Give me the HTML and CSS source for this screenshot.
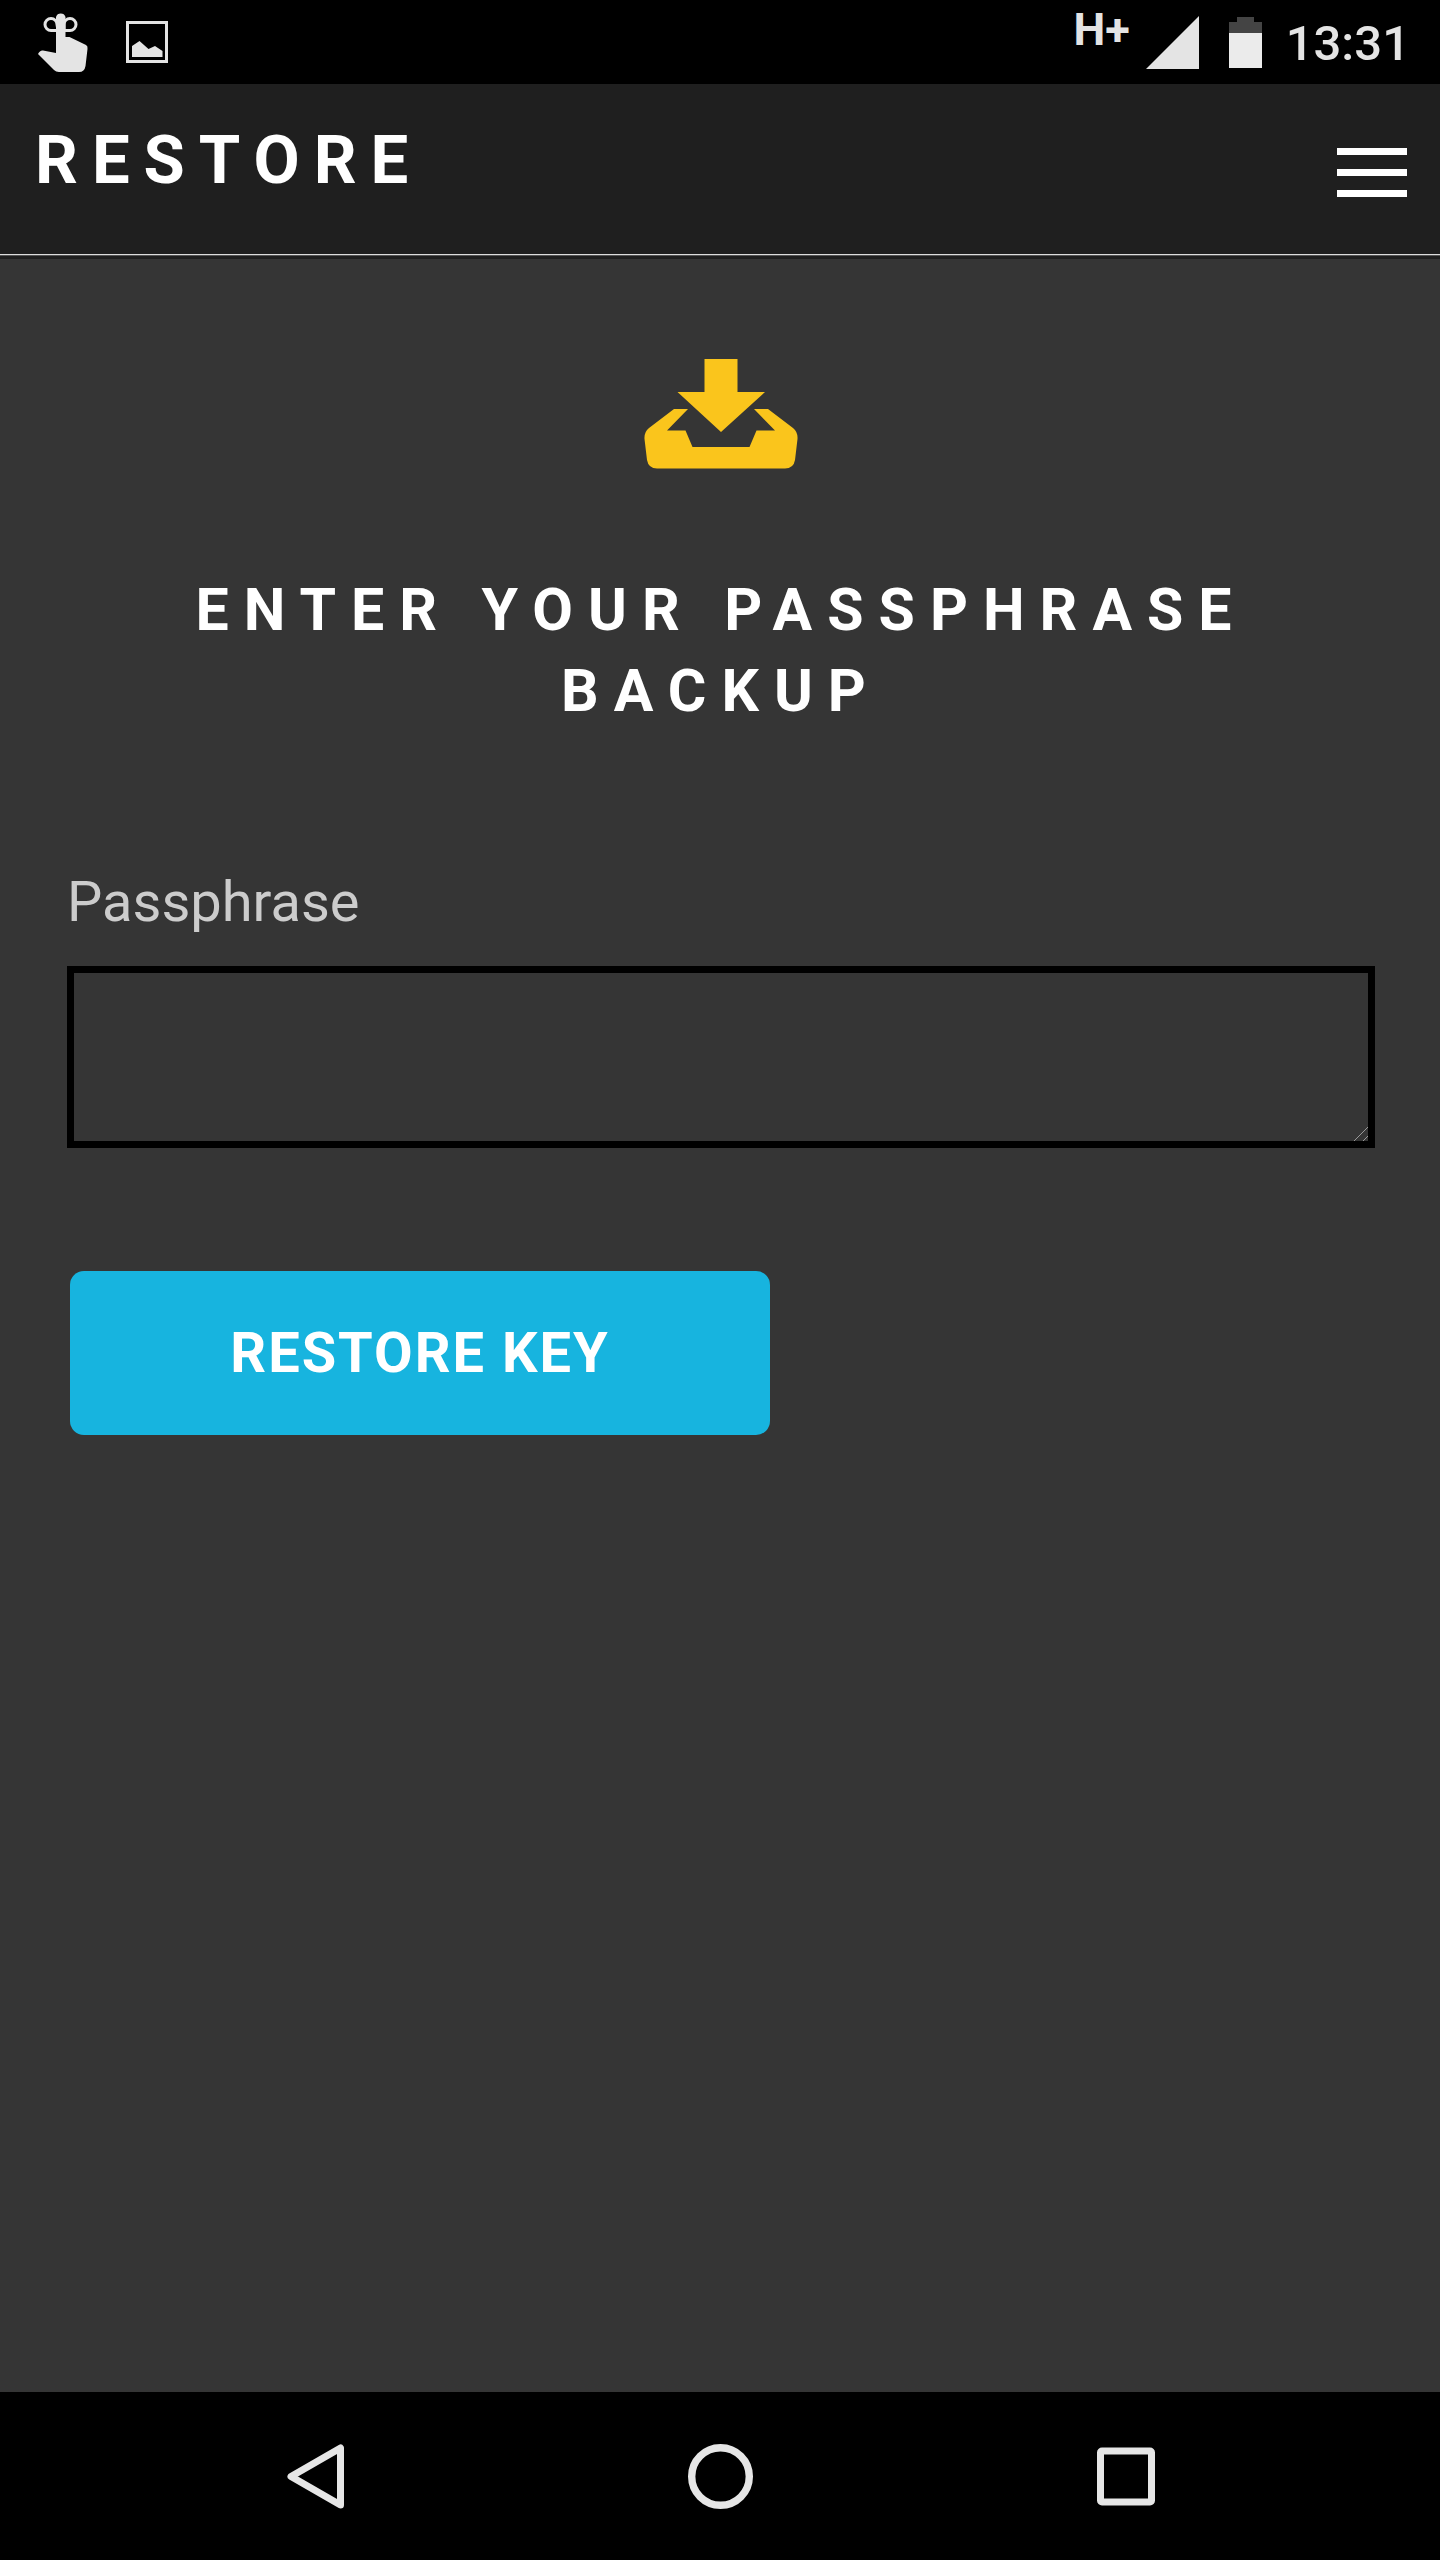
FILE: index.html
```html
<!DOCTYPE html>
<html lang="en">
<head>
  <meta charset="utf-8">
  <meta name="viewport" content="width=device-width, initial-scale=1">
  <title>Restore</title>
  <link rel="stylesheet" href="styles.css">
</head>
<body class="screen">
  <div class="status-bar">
    <div class="status-group status-notices">
      <svg class="icon-touch" viewBox="0 0 50 60" aria-hidden="true">
        <path fill="currentColor" d="M18 42V5a5 5 0 0 1 9.500 0V25h4L48 33Q50 34 49.500 37L47.500 54Q46.500 60 41 60H21Q18 60 16 58L0 42Q2 38 5 38.500L18 41Z"/>
        <g fill="none" stroke="currentColor" stroke-width="3">
          <path d="M20 18.500H13a6 6 0 1 1 6-6Z"/>
          <path d="M26 18.500H32a6 6 0 1 0-6-6Z"/>
        </g>
      </svg>
      <svg class="icon-image" viewBox="0 0 42 42" aria-hidden="true">
        <rect x="1.500" y="1.500" width="39" height="39" fill="none" stroke="currentColor" stroke-width="3"/>
        <path fill="currentColor" d="M6 25L13.500 20L22.500 28L29 25L36.500 30V36H6Z"/>
      </svg>
    </div>
    <div class="status-group status-system">
      <span class="network">H+</span>
      <svg class="icon-signal" viewBox="0 0 53 53" aria-hidden="true"><path fill="currentColor" d="M0 53L53 0V53Z"/></svg>
      <svg class="icon-battery" viewBox="0 0 33 51" aria-hidden="true">
        <path fill="#444" d="M8 0H25V5H33V16H0V5H8Z"/>
        <path fill="#ebebeb" d="M0 16H33V51H0Z"/>
      </svg>
      <time class="clock">13:31</time>
    </div>
  </div>

  <header class="app-header">
    <h1 class="app-title">RESTORE</h1>
    <button class="menu-button" type="button" aria-label="Menu">
      <span class="menu-line"></span>
      <span class="menu-line"></span>
      <span class="menu-line"></span>
    </button>
  </header>

  <main class="content">
    <svg class="icon-restore" viewBox="0 0 154 110" aria-hidden="true">
      <path fill="currentColor" d="M60.500 0H93.500V33H121L77 73L33.500 33H60.500Z"/>
      <path fill="currentColor" d="M30 50H44L23 71.500H41.500L48.500 88H105.500L112.500 71.500H131L110 50H124L149 69Q154 73 153.500 80L151 101Q149.500 109.500 141 109.500H13Q4.500 109.500 3 101L.5 80Q0 73 5 69Z"/>
    </svg>
    <h2 class="heading">ENTER YOUR PASSPHRASE BACKUP</h2>
    <form class="restore-form">
      <label class="field-label" for="passphrase">Passphrase</label>
      <textarea class="field-input" id="passphrase" name="passphrase"></textarea>
      <button class="submit-button" type="button">RESTORE KEY</button>
    </form>
  </main>

  <nav class="nav-bar" aria-label="System">
    <button class="nav-button" type="button" aria-label="Back">
      <svg class="nav-icon" viewBox="0 0 65 65" aria-hidden="true"><path d="M8 32.500L57.500 4V61Z" fill="none" stroke="currentColor" stroke-width="7" stroke-linejoin="round"/></svg>
    </button>
    <button class="nav-button" type="button" aria-label="Home">
      <svg class="nav-icon" viewBox="0 0 65 65" aria-hidden="true"><circle cx="32.500" cy="32.500" r="28.800" fill="none" stroke="currentColor" stroke-width="7.400"/></svg>
    </button>
    <button class="nav-button" type="button" aria-label="Recent apps">
      <svg class="nav-icon" viewBox="0 0 65 65" aria-hidden="true"><rect x="7.500" y="7" width="51" height="51" rx="1.500" fill="none" stroke="currentColor" stroke-width="7"/></svg>
    </button>
  </nav>
</body>
</html>
```

FILE: styles.css
```css
* {
  box-sizing: border-box;
}

.screen {
  display: flex;
  flex-direction: column;
  min-height: 100vh;
  margin: 0;
  background: #353535;
  color: #fff;
  font-family: Roboto, "Liberation Sans", sans-serif;
}

.status-bar {
  display: flex;
  justify-content: space-between;
  height: 84px;
  padding: 0 30px 0 38px;
  background: #000;
  color: #e4e4e4;
}

.status-group {
  display: flex;
  align-items: center;
}

.status-notices {
  gap: 38px;
}

.icon-touch {
  width: 50px;
  height: 60px;
}

.icon-image {
  width: 42px;
  height: 42px;
}

.network {
  align-self: flex-start;
  margin-right: 16px;
  font-size: 45px;
  font-weight: 700;
  line-height: 60px;
}

.icon-signal {
  width: 53px;
  height: 53px;
  margin-right: 30px;
}

.icon-battery {
  width: 33px;
  height: 51px;
  margin-right: 24px;
}

.clock {
  padding-top: 4px;
  font-size: 49px;
  font-weight: 500;
  line-height: 60px;
}

.app-header {
  display: flex;
  align-items: center;
  justify-content: space-between;
  height: 175px;
  padding: 4px 33px 0 35px;
  border-bottom: 3px solid #1f1f1f;
  background: #1f1f1f;
  box-shadow: inset 0 -1px #555, inset 0 -2px #ddd;
}

.app-title {
  margin: 0 0 24px;
  font-size: 67px;
  font-weight: 700;
  line-height: 80px;
  letter-spacing: 14px;
}

.menu-button {
  display: flex;
  flex-direction: column;
  gap: 14px;
  width: 70px;
  padding: 0;
  border: 0;
  background: none;
}

.menu-line {
  height: 7px;
  background: #fff;
}

.content {
  display: flex;
  flex: 1;
  flex-direction: column;
  align-items: center;
  padding: 100px 65px 100px 67px;
}

.icon-restore {
  width: 154px;
  height: 110px;
  color: #fac51c;
}

.heading {
  margin: 100px 0 0;
  font-size: 59px;
  font-weight: 700;
  line-height: 81px;
  letter-spacing: 15px;
  text-align: center;
}

.restore-form {
  display: flex;
  flex-direction: column;
  align-items: flex-start;
  width: 100%;
  margin-top: 138px;
}

.field-label {
  color: #ccc;
  font-size: 56px;
  line-height: 66px;
}

.field-input {
  width: 100%;
  height: 182px;
  margin: 31px 0 123px;
  padding: 16px;
  border: 7px solid #000;
  border-radius: 0;
  outline: 0;
  background: transparent;
  color: #fff;
  font: inherit;
  font-size: 56px;
}

.field-input::-webkit-resizer {
  background: linear-gradient(135deg, transparent 50%, #999 50% 56%, transparent 56% 80%, #999 80% 86%, transparent 86%);
}

.submit-button {
  width: 700px;
  max-width: 100%;
  height: 164px;
  margin-left: 3px;
  border: 0;
  border-radius: 14px;
  background: #17b4df;
  color: #fff;
  font: inherit;
  font-size: 56px;
  font-weight: 700;
  letter-spacing: 2px;
}

.nav-bar {
  display: flex;
  align-items: center;
  justify-content: center;
  gap: 340px;
  height: 168px;
  background: #000;
}

.nav-button {
  display: flex;
  padding: 0;
  border: 0;
  background: none;
  color: #e6e6e6;
}

.nav-icon {
  width: 65px;
  height: 65px;
}
```
